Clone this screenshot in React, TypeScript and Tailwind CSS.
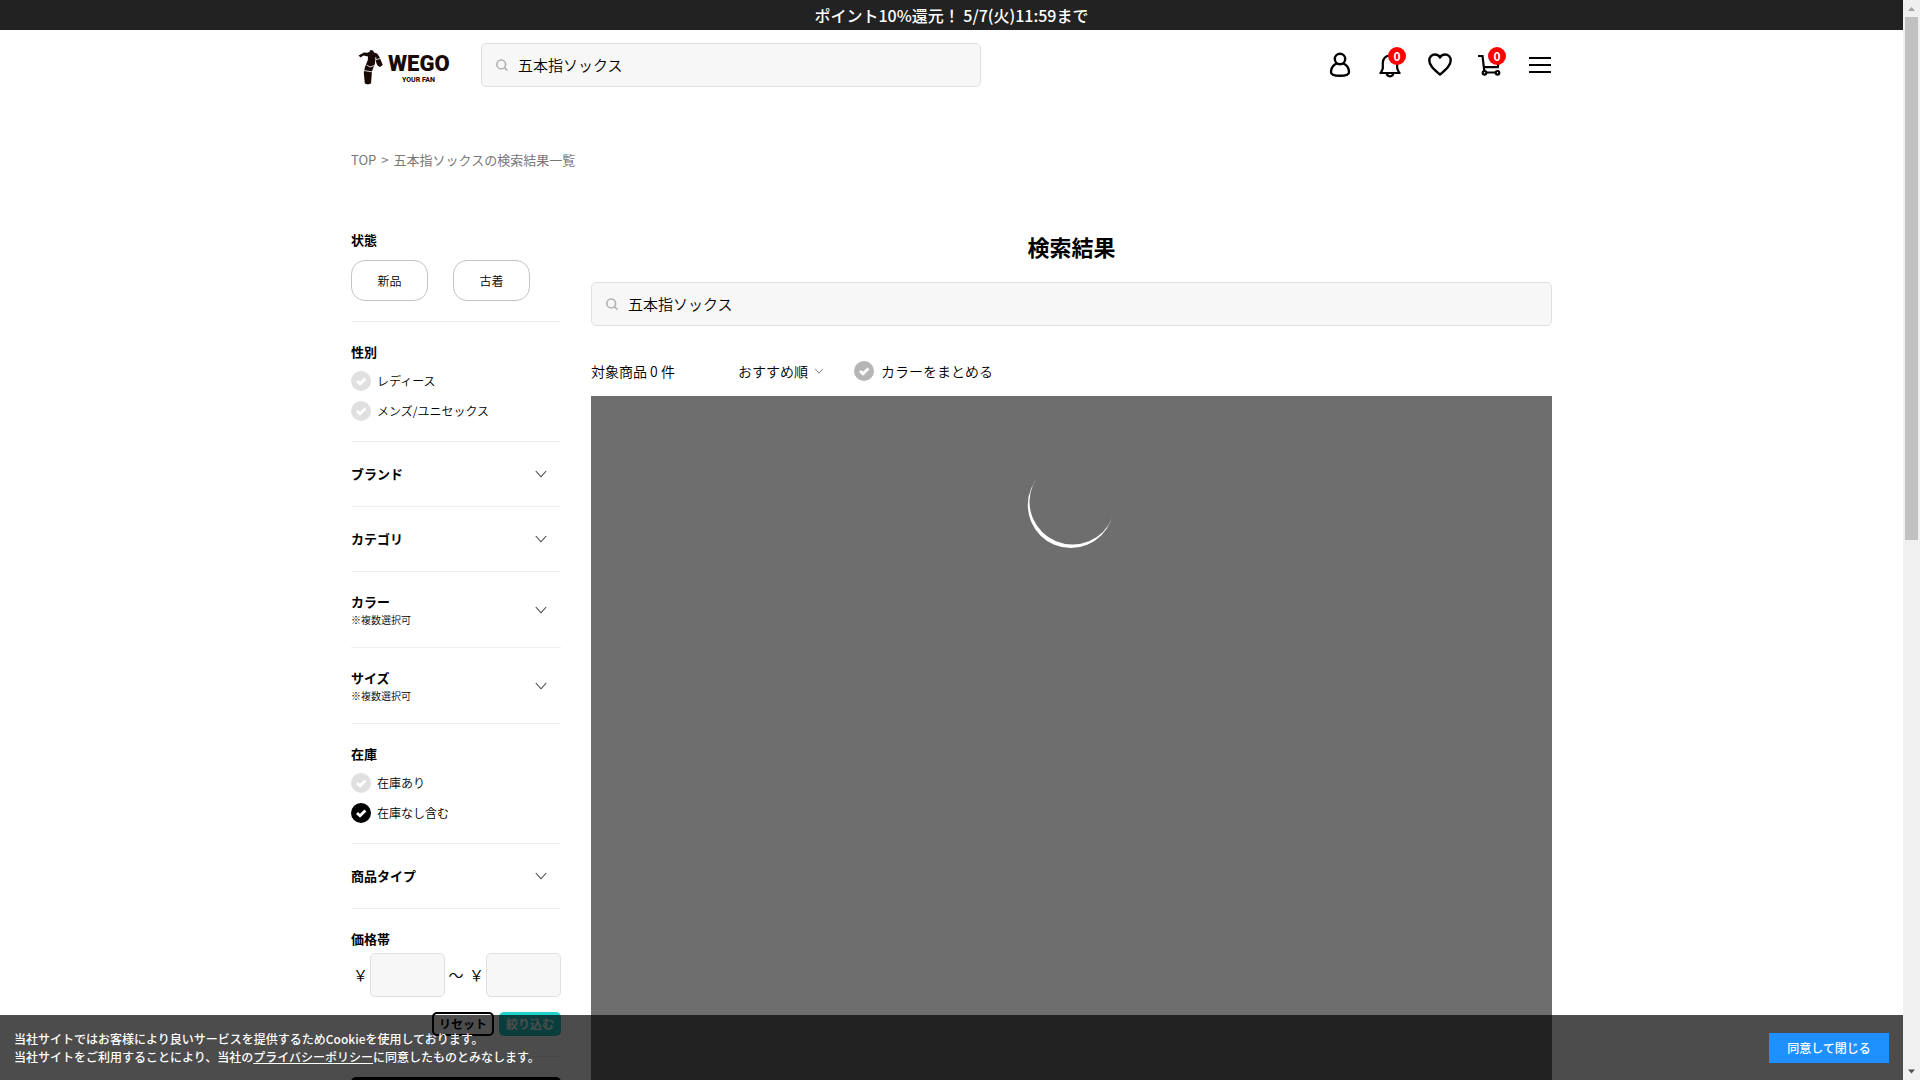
import { useState, type ReactNode } from "react"

const KEYWORD = "五本指ソックス"

function SearchIcon() {
  return (
    <svg viewBox="0 0 12 12" className="h-3 w-3 shrink-0" fill="none" stroke="#b0b0b0" strokeWidth="1.6">
      <circle cx="5.2" cy="5.4" r="4.4" />
      <path d="M8.4 8.6L11.4 11.6" />
    </svg>
  )
}

function Chevron({ className }: { className: string }) {
  return (
    <svg viewBox="0 0 12 8" className={className} fill="none" stroke="currentColor" strokeWidth="1.1">
      <path d="M0.8 1L6 6.8L11.2 1" />
    </svg>
  )
}

function SearchBox({ id, className }: { id: string; className: string }) {
  const [value, setValue] = useState(KEYWORD)
  return (
    <label
      htmlFor={id}
      className={`flex h-11 items-center gap-2.5 rounded-[5px] border border-[#e0e0e0] bg-[#f7f7f7] px-3.5 ${className}`}
    >
      <SearchIcon />
      <input
        id={id}
        aria-label="キーワード検索"
        value={value}
        onChange={(e) => setValue(e.target.value)}
        className="min-w-0 flex-1 bg-transparent text-[15px] font-[350] text-black outline-none"
      />
    </label>
  )
}

function CheckMark() {
  return (
    <svg viewBox="0 0 20 20" className="pointer-events-none absolute inset-0 h-5 w-5" fill="none" stroke="#fff" strokeWidth="2.8">
      <path d="M6 10L9 12.8L14.4 7.4" />
    </svg>
  )
}

function Check({
  label,
  defaultChecked = false,
  type = "checkbox",
  name,
}: {
  label: string
  defaultChecked?: boolean
  type?: "checkbox" | "radio"
  name?: string
}) {
  return (
    <label className="flex h-5 items-center gap-1.5 text-xs font-[350] text-black">
      <span className="relative h-5 w-5 shrink-0">
        <input
          type={type}
          name={name}
          defaultChecked={defaultChecked}
          className="block h-5 w-5 appearance-none rounded-full bg-[#e0e0e0] checked:bg-black"
        />
        <CheckMark />
      </span>
      {label}
    </label>
  )
}

function Section({ title, className = "", children }: { title: string; className?: string; children: ReactNode }) {
  return (
    <section className={`border-b border-[#efefef] pb-5 ${className}`}>
      <h2 className="text-[13px] leading-5 font-bold text-black">{title}</h2>
      {children}
    </section>
  )
}

function Accordion({ title, note }: { title: string; note?: string }) {
  return (
    <button
      type="button"
      className={`flex w-full items-center justify-between border-b border-[#efefef] pr-3.5 text-left ${note ? "h-[76px]" : "h-[65px]"}`}
    >
      <span>
        <span className="block text-[13px] leading-5 font-bold text-black">{title}</span>
        {note && <span className="block text-[10px] leading-4 font-[350] text-black">{note}</span>}
      </span>
      <Chevron className="h-2 w-3 text-[#444]" />
    </button>
  )
}

function Logo() {
  return (
    <a href="#" aria-label="WEGO" className="block text-[#1a0a06]">
      <svg viewBox="0 0 102 40" className="h-10 w-[102px]" fill="currentColor">
        {/* walking figure */}
        <path d="M7.500 10.500L13 7.500L16.500 7.800L18.500 6.800L19.500 5L22 5.500L23 7.500L26 8.500L28.500 12L31.800 20L28.800 22L26.500 20.500L24.500 16L23.500 20L21 26L20 38.500L17 39.500L13.800 38.500L12.800 27.500L14 22L16.800 15L17 11.500L12.500 10.500L9.500 12.500Z" />
        <path d="M12.500 25.500L22 27M15.500 20L19 22L23.500 20.500M25 14.500L29.500 13.500M24.500 18L24.800 12" fill="none" stroke="#fff" strokeWidth="0.8" />
        <text x="37" y="26" fontFamily="Roboto, sans-serif" fontWeight="900" fontSize="22">
          WEGO
        </text>
        <text x="51" y="37" fontFamily="Roboto, sans-serif" fontWeight="800" fontSize="7">
          YOUR FAN
        </text>
      </svg>
    </a>
  )
}

function Badge() {
  return (
    <span className="absolute -top-1 -right-1 flex h-[18px] w-[18px] items-center justify-center rounded-full bg-[#f00] text-xs leading-none font-bold text-white">
      0
    </span>
  )
}

function HeaderIcons() {
  return (
    <nav className="flex items-center gap-[26px]">
      <button type="button" aria-label="マイページ">
        <svg viewBox="0 0 24 28" className="h-7 w-6" fill="none" stroke="#000" strokeWidth="2.4">
          <circle cx="12" cy="8" r="5.2" />
          <path d="M8.800 12.400C5.200 14 3 17.800 3 21.300C3 24 6.500 24.800 12 24.800S21 24 21 21.300C21 17.800 18.800 14 15.200 12.400" />
        </svg>
      </button>
      <button type="button" aria-label="お知らせ" className="relative">
        <svg viewBox="0 0 24 28" className="h-7 w-6" fill="none" stroke="#000" strokeWidth="2.2">
          <path d="M1.500 22H22.500M2.800 22L4.800 17.500V12C4.800 7.500 8 4.500 12 4.500S19.200 7.500 19.200 12V17.500L21.200 22" />
          <path d="M8.800 22.500C9 26.200 15 26.200 15.200 22.500" />
        </svg>
        <Badge />
      </button>
      <button type="button" aria-label="お気に入り">
        <svg viewBox="0 0 24 28" className="h-7 w-6" fill="none" stroke="#000" strokeWidth="2.4">
          <path d="M12 6.200C10.500 4.200 8.800 3.500 7 3.500C3.800 3.500 1.300 6 1.300 9.500C1.300 14.500 5.500 18 12 23.500C18.500 18 22.700 14.500 22.700 9.500C22.700 6 20.200 3.500 17 3.500C15.200 3.500 13.500 4.200 12 6.200Z" />
        </svg>
      </button>
      <button type="button" aria-label="カート" className="relative">
        <svg viewBox="0 0 24 28" className="h-7 w-6" fill="none" stroke="#000" strokeWidth="2.200">
          <path d="M0 5H4.500L6.500 21.500M6 16.200H19.800L21 9M6.500 21.500H19" />
          <circle cx="6.500" cy="21.800" r="1.800" fill="#fff" />
          <circle cx="19.500" cy="21.800" r="1.800" fill="#fff" />
        </svg>
        <Badge />
      </button>
      <button type="button" aria-label="メニュー">
        <svg viewBox="0 0 24 28" className="h-7 w-6" stroke="#000" strokeWidth="2">
          <path d="M1 7H23M1 14H23M1 21H23" />
        </svg>
      </button>
    </nav>
  )
}

function Sidebar() {
  return (
    <aside className="w-[210px] shrink-0">
      <Section title="状態">
        <div className="mt-2.5 flex gap-[25px]">
          {["新品", "古着"].map((label) => (
            <button key={label} type="button" className="h-[41px] w-[77px] rounded-[14px] border border-[#c4c4c4] text-xs font-[350] text-black">
              {label}
            </button>
          ))}
        </div>
      </Section>
      <Section title="性別" className="pt-5">
        <div className="mt-[9px] flex flex-col gap-2.5">
          <Check label="レディース" />
          <Check label="メンズ/ユニセックス" />
        </div>
      </Section>
      <Accordion title="ブランド" />
      <Accordion title="カテゴリ" />
      <Accordion title="カラー" note="※複数選択可" />
      <Accordion title="サイズ" note="※複数選択可" />
      <Section title="在庫" className="pt-5">
        <div className="mt-[9px] flex flex-col gap-2.5">
          <Check type="radio" name="stock" label="在庫あり" />
          <Check type="radio" name="stock" label="在庫なし含む" defaultChecked />
        </div>
      </Section>
      <Accordion title="商品タイプ" />
      <Section title="価格帯" className="pt-5">
        <div className="mt-1 flex items-center text-center text-[15px] font-[350]">
          <span className="w-[19px]">￥</span>
          <input aria-label="下限価格" className="h-11 w-[75px] rounded-[5px] border border-[#e0e0e0] bg-[#f7f7f7] px-2" />
          <span className="w-[22px]">～</span>
          <span className="w-[19px]">￥</span>
          <input aria-label="上限価格" className="h-11 w-[75px] rounded-[5px] border border-[#e0e0e0] bg-[#f7f7f7] px-2" />
        </div>
        <div className="mt-[15px] flex justify-end gap-[5px] text-xs font-bold">
          <button type="button" className="h-6 w-[62px] rounded-[5px] border-2 border-black text-black">
            リセット
          </button>
          <button type="button" className="h-6 w-[62px] rounded-[5px] bg-[#1fd1cb] text-white">
            絞り込む
          </button>
        </div>
      </Section>
      <button type="button" aria-label="条件を保存" className="mt-5 block h-11 w-full rounded-[5px] bg-black" />
    </aside>
  )
}

// crescent, thickest at the bottom left
function Spinner() {
  return (
    <svg viewBox="0 0 90 90" className="h-[90px] w-[90px]">
      <mask id="crescent">
        <rect width="90" height="90" fill="#fff" />
        <circle cx="45.500" cy="41.600" r="43" fill="#000" />
      </mask>
      <circle cx="43.800" cy="45" r="43" fill="#fff" mask="url(#crescent)" />
    </svg>
  )
}

function Results() {
  return (
    <main className="flex min-w-0 flex-1 flex-col">
      <h1 className="text-center text-[22px] leading-8 font-bold text-black">検索結果</h1>
      <SearchBox id="result-keyword" className="mt-5" />
      <div className="mt-[35px] flex h-5 items-center text-sm font-[350] text-black">
        <p className="w-[147px]">対象商品 0 件</p>
        <label className="flex items-center">
          <select aria-label="並び順" className="w-[72px] appearance-none bg-transparent outline-none">
            <option>おすすめ順</option>
          </select>
          <Chevron className="ml-1 h-1.5 w-2.5 text-[#666]" />
        </label>
        <label className="ml-[30px] flex items-center gap-[7px]">
          <span className="relative h-5 w-5">
            <input type="checkbox" className="block h-5 w-5 appearance-none rounded-full bg-[#b5b5b5] checked:bg-black" />
            <CheckMark />
          </span>
          カラーをまとめる
        </label>
      </div>
      <div className="mt-[15px] flex min-h-[720px] flex-1 items-start justify-center bg-[#6e6e6e] pt-16">
        <Spinner />
      </div>
    </main>
  )
}

function CookieBar() {
  return (
    <div className="absolute inset-x-0 bottom-0 flex h-[65px] items-center justify-between bg-black/70 px-3.5">
      <p className="text-xs leading-[18px] font-medium text-white">
        当社サイトではお客様により良いサービスを提供するためCookieを使用しております。
        <br />
        当社サイトをご利用することにより、当社の
        <a href="#" className="underline">プライバシーポリシー</a>
        に同意したものとみなします。
      </p>
      <button type="button" className="h-[30px] w-[120px] bg-[#1e90ff] text-xs font-medium text-white">
        同意して閉じる
      </button>
    </div>
  )
}

function ScrollBar() {
  return (
    <div className="flex w-[17px] shrink-0 flex-col items-center justify-between bg-[#f0f0f0]">
      <div className="flex h-1/2 w-full flex-col items-center">
        <svg viewBox="0 0 17 17" className="h-[17px] w-[17px] shrink-0" fill="#a3a3a3">
          <path d="M5 11L8.500 7L12 11Z" />
        </svg>
        <div className="w-[13px] flex-1 bg-[#c1c1c1]" />
      </div>
      <svg viewBox="0 0 17 17" className="h-[17px] w-[17px]" fill="#505050">
        <path d="M5 6.500H12L8.500 10.500Z" />
      </svg>
    </div>
  )
}

export default function App() {
  return (
    <div className="flex h-screen overflow-hidden bg-white font-['Noto_Sans_CJK_JP',sans-serif]">
      <div className="relative min-w-0 flex-1 overflow-hidden">
        <p className="bg-[#222] text-center text-base leading-[30px] font-medium text-white">
          ポイント10%還元！ 5/7(火)11:59まで
        </p>
        <div className="mx-auto max-w-[1201px]">
          <header className="flex h-[70px] items-center justify-between">
            <div className="flex items-center gap-7">
              <Logo />
              <SearchBox id="header-keyword" className="w-[500px]" />
            </div>
            <HeaderIcons />
          </header>
          <div className="mt-[50px] flex gap-[5px] text-[13px] leading-5 text-[#777]">
            <a href="#">TOP</a>
            <span>&gt;</span>
            <span>{KEYWORD}の検索結果一覧</span>
          </div>
          <div className="mt-[60px] flex gap-[30px]">
            <Sidebar />
            <Results />
          </div>
        </div>
        <CookieBar />
      </div>
      <ScrollBar />
    </div>
  )
}
